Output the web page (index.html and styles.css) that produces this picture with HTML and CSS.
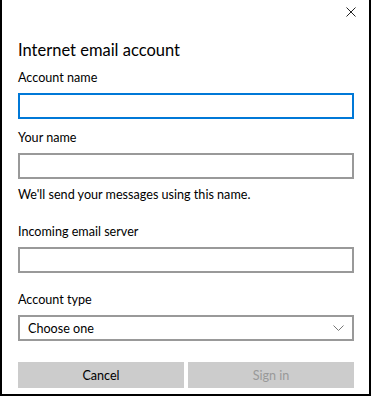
FILE: index.html
```html
<!DOCTYPE html>
<html lang="en">
<head>
    <meta charset="UTF-8" />
    <meta name="viewport" content="width=device-width, initial-scale=1.0">
    <title>Internet email account</title>
    <link rel="stylesheet" href="styles.css">
</head>
<body>
    <div class="dialog">
        <div class="topbar">
            <button class="close" aria-label="Close">
                <svg width="10" height="10" viewBox="0 0 10 10">
                    <path d="M0.5 0.5 L9.5 9.5 M9.5 0.5 L0.5 9.5" stroke="#222" stroke-width="1" fill="none"/>
                </svg>
            </button>
        </div>

        <p class="title">Internet email account</p>

        <div class="field">
            <label class="label" for="accountName">Account name</label>
            <input class="textbox focused" id="accountName" type="text">
        </div>

        <div class="field">
            <label class="label" for="yourName">Your name</label>
            <input class="textbox" id="yourName" type="text">
            <p class="hint">We'll send your messages using this name.</p>
        </div>

        <div class="field">
            <label class="label" for="server">Incoming email server</label>
            <input class="textbox" id="server" type="text">
        </div>

        <div class="field type">
            <label class="label">Account type</label>
            <div class="select">
                <span>Choose one</span>
                <svg width="11" height="6" viewBox="0 0 11 6">
                    <path d="M0.5 0.5 L5.5 5.5 L10.5 0.5" stroke="#777" stroke-width="1" fill="none"/>
                </svg>
            </div>
        </div>

        <div class="actions">
            <button class="btn">Cancel</button>
            <button class="btn disabled">Sign in</button>
        </div>
    </div>
</body>
</html>
```

FILE: styles.css
```css
body {
    margin: 0;
    background-color: #fff;
    font-family: Lato, "Open Sans", sans-serif;
    color: #000;
}

.dialog {
    box-sizing: border-box;
    width: 371px;
    height: 396px;
    border: 2px solid #000;
    border-top: none;
    padding: 0 15px 0 16px;
    display: flex;
    flex-direction: column;
}

.topbar {
    display: flex;
    justify-content: flex-end;
    height: 30px;
    margin-right: -4px;
}

.close {
    background: none;
    border: none;
    padding: 0;
    width: 14px;
    height: 14px;
    margin-top: 5px;
    display: flex;
    align-items: center;
    justify-content: center;
}

.title {
    margin: 8px 0 0;
    font-size: 16.5px;
    line-height: 24px;
}

.field {
    display: flex;
    flex-direction: column;
}

.label {
    font-size: 12.6px;
    line-height: 20px;
    margin-top: 6px;
    margin-bottom: 5px;
}

.textbox {
    box-sizing: border-box;
    height: 26px;
    border: 2px solid #999;
    margin: 0;
    padding: 0 8px;
    font: inherit;
    outline: none;
}

.textbox.focused {
    border-color: #0078d7;
}

.hint {
    margin: 6px 0 8px;
    font-size: 12.6px;
    line-height: 20px;
}

.field + .field {
    margin-top: 3px;
}

.field.type {
    margin-top: 11px;
}

.select {
    box-sizing: border-box;
    height: 26px;
    border: 2px solid #999;
    padding: 0 8px;
    display: flex;
    align-items: center;
    justify-content: space-between;
    font-size: 12.6px;
}

.actions {
    display: grid;
    grid-template-columns: 1fr 1fr;
    gap: 4px;
    margin-top: 21px;
}

.btn {
    height: 26px;
    border: none;
    background-color: #ccc;
    font-family: inherit;
    font-size: 12.6px;
    color: #000;
    padding: 0;
}

.btn.disabled {
    color: #999;
}
```
